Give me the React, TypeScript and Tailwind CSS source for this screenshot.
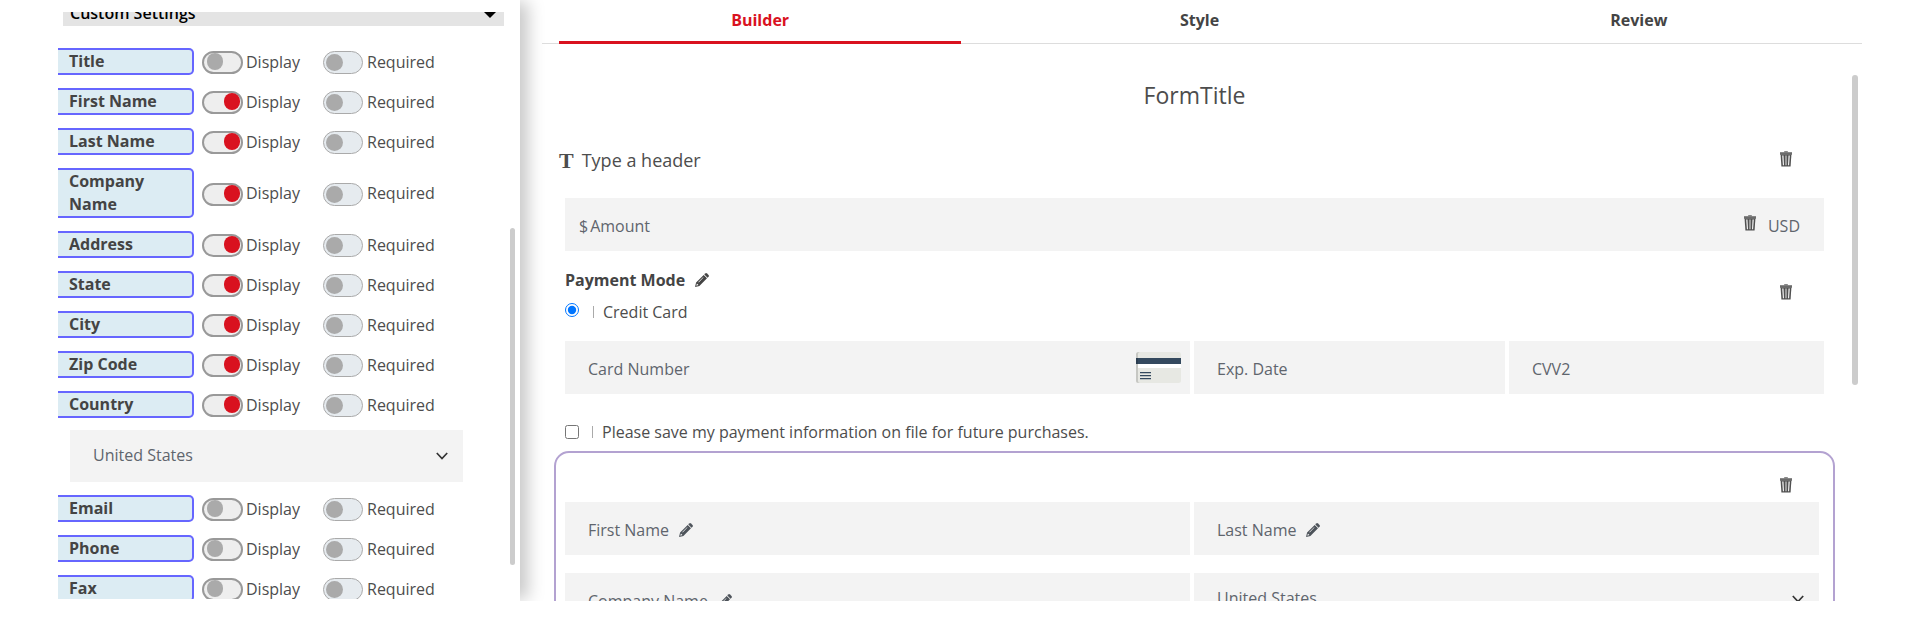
import React from "react";

const rowsTop = [
  { name: "Title", on: false },
  { name: "First Name", on: true },
  { name: "Last Name", on: true },
  { name: "Company Name", on: true },
  { name: "Address", on: true },
  { name: "State", on: true },
  { name: "City", on: true },
  { name: "Zip Code", on: true },
  { name: "Country", on: true },
];

const rowsBottom = [
  { name: "Email", on: false },
  { name: "Phone", on: false },
  { name: "Fax", on: false },
];

function Trash() {
  return (
    <svg viewBox="0 0 12 16" className="h-4 w-3" aria-hidden="true">
      <path d="M4.200 0.300h3.600v1H4.200z" fill="#555" />
      <path d="M0 1.200h12v2.600H0z" fill="#6b6b6b" />
      <path d="M0.600 3.500h10.800L10.600 15.600H1.400z" fill="#505050" />
      <path d="M2.200 4.500h1.300l0.500 9.700H2.900zM9.800 4.500H8.500L8 14.200h1.100z" fill="#f4f4f4" />
      <path d="M5.100 4.500h1.800v9.700H5.100z" fill="#a5a5a5" />
    </svg>
  );
}

function TrashButton({ label }: { label: string }) {
  return (
    <button type="button" aria-label={label} className="block">
      <Trash />
    </button>
  );
}

function Pencil() {
  return (
    <svg viewBox="0 0 14 14" className="h-3.5 w-3.5 shrink-0" fill="currentColor" aria-hidden="true">
      <path d="M10.2 0.500a1.300 1.300 0 0 1 1.800 0l1.500 1.500a1.300 1.300 0 0 1 0 1.800l-0.900 0.900-3.300-3.300z" />
      <path
        fillRule="evenodd"
        d="M8.700 2l3.300 3.300-7.600 7.600L0 14l1.100-4.400zM1.900 10.500l-0.600 2.200 2.200-0.600zM8.100 4.200L3.300 9l0.400 0.400 4.800-4.800z"
      />
    </svg>
  );
}

function Chevron() {
  return (
    <svg viewBox="0 0 12 8" className="h-2 w-3" fill="none" stroke="#333" strokeWidth="1.7" aria-hidden="true">
      <path d="M0.800 1l5.200 5.500L11.200 1" />
    </svg>
  );
}

function CardIcon() {
  return (
    <svg viewBox="0 0 45 31" className="h-[31px] w-[45px] shrink-0" aria-hidden="true">
      <rect width="45" height="31" rx="2.5" fill="#e7e8e3" />
      <path d="M2.5 0H4a2 2 0 0 0-2 2v27a2 2 0 0 0 2 2H2.500A2.500 2.500 0 0 1 0 28.500V2.500A2.500 2.500 0 0 1 2.500 0z" fill="#c6c7c3" />
      <path d="M0 6h45v6H0z" fill="#34495e" />
      <path d="M0 6h2v6H0z" fill="#2c3e50" />
      <path d="M2 12h43v4H2z" fill="#fff" />
      <path d="M4 20h11v1.300H4zM4 23h11v1.300H4zM4 26h11v1.300H4z" fill="#34495e" />
    </svg>
  );
}

function SettingRow({ name, on }: { name: string; on: boolean }) {
  return (
    <div className="flex items-center">
      <div className="w-[136px] shrink-0 rounded-r-[5px] border-2 border-l-0 border-[#6666ff] bg-[#dcecf3] pr-3 pl-[11px] font-bold leading-[23px] text-[#444]">
        {name}
      </div>
      <label className="ml-2 flex w-[121px] items-center gap-[3px] pt-0.5 leading-[22px]">
        <input
          type="checkbox"
          defaultChecked={on}
          className="relative h-[23px] w-[41px] shrink-0 appearance-none rounded-full border-2 border-[#999] bg-[#eee] before:absolute before:top-0 before:left-[3px] before:h-[17px] before:w-4 before:rounded-full before:bg-[#aaa] checked:before:left-5 checked:before:bg-[#d9121f]"
        />
        <span className="pb-0.5">Display</span>
      </label>
      <label className="flex items-center gap-1 pt-0.5 leading-[22px]">
        <input
          type="checkbox"
          disabled
          className="relative h-[23px] w-10 shrink-0 appearance-none rounded-full border border-[#aaa] bg-[#e6ebef] before:absolute before:top-0.5 before:left-0.5 before:h-[17px] before:w-[17px] before:rounded-full before:bg-[#aaa]"
        />
        <span className="pb-0.5">Required</span>
      </label>
    </div>
  );
}

function CountrySelect({ label, className }: { label: string; className: string }) {
  return (
    <div className={"relative flex bg-[#f3f3f3] text-[#5f656d] " + className}>
      <select aria-label={label} className="w-full appearance-none bg-transparent px-[23px] pb-[3px] outline-none">
        <option>United States</option>
      </select>
      <span className="pointer-events-none absolute top-[22px] right-[15px]">
        <Chevron />
      </span>
    </div>
  );
}

function NameField({ label }: { label: string }) {
  return (
    <div className="flex h-[53px] items-center gap-2.5 bg-[#f3f3f3] px-[23px] pt-0.5 text-[#4d535a]">
      <span className="text-[#5f656d]">{label}</span>
      <button type="button" aria-label={"Edit " + label}>
        <Pencil />
      </button>
    </div>
  );
}

const inputClass =
  "min-w-0 bg-transparent pt-0.5 text-[#5f656d] outline-none placeholder:text-[#5f656d] placeholder:opacity-100";

export default function App() {
  return (
    <div className="h-screen bg-white pb-[31px] font-['Open_Sans','Noto_Sans',sans-serif] text-base text-[#4d4d4d]">
      <div className="flex h-full overflow-hidden">
        <aside className="relative w-[520px] shrink-0 pt-3 pb-0.5 pl-[58px] shadow-[10px_0_16px_-2px_rgba(0,0,0,0.22)]">
          <div className="h-full overflow-hidden">
            <button
              type="button"
              className="-mt-3 ml-[5px] flex h-[26px] w-[441px] items-center justify-between bg-[#e4e4e4] pr-2 pl-[7px] text-left font-semibold text-black"
            >
              Custom Settings
              <svg viewBox="0 0 12 6" className="mt-1 h-1.5 w-3" aria-hidden="true">
                <path d="M0 0h12L6 6z" />
              </svg>
            </button>
            <div className="mt-[22px] flex flex-col gap-[13px]">
              {rowsTop.map((r) => (
                <SettingRow key={r.name} {...r} />
              ))}
              <CountrySelect label="Default country" className="-mt-px ml-3 h-[52px] w-[393px]" />
              {rowsBottom.map((r) => (
                <SettingRow key={r.name} {...r} />
              ))}
            </div>
          </div>
          <div className="absolute top-[228px] right-[5px] h-[337px] w-[5px] rounded-full bg-[#ccc]" />
        </aside>

        <main className="relative mr-[58px] ml-[22px] flex min-w-0 flex-1 flex-col">
          <nav className="flex h-11 shrink-0 border-b border-[#ddd] pr-0.5 font-bold text-[#444]">
            {["Builder", "Style", "Review"].map((t, i) => (
              <a
                key={t}
                href={"#" + t.toLowerCase()}
                className={
                  "-mb-px mr-5 ml-[17px] flex flex-1 justify-center pt-2 " +
                  (i === 0 ? "border-b-3 border-[#d9121f] text-[#d9121f]" : "")
                }
              >
                {t}
              </a>
            ))}
          </nav>

          <div className="min-h-0 flex-1 overflow-hidden pr-[27px] pl-3">
            <h1 className="mt-8 text-center text-[23px] leading-[38px]">FormTitle</h1>

            <div className="mt-[30px] flex h-8 items-center gap-2 pr-[43px] pl-[5px]">
              <span className="font-['Liberation_Serif',serif] text-[22px] font-bold">T</span>
              <h2 className="flex-1 text-lg">Type a header</h2>
              <span className="pb-0.5">
                <TrashButton label="Delete header" />
              </span>
            </div>

            <div className="mx-[11px] mt-[22px] flex h-[53px] items-center bg-[#f3f3f3] pr-6 pl-3.5 text-[#5f656d]">
              <label htmlFor="amount" className="pt-0.5 pr-0.5">$</label>
              <input id="amount" placeholder="Amount" className={inputClass + " flex-1"} />
              <span className="pb-1">
                <TrashButton label="Delete amount" />
              </span>
              <span className="pt-0.5 pl-3">USD</span>
            </div>

            <div className="mt-[17px] flex items-center pr-[43px] pl-[11px]">
              <div className="flex-1">
                <div className="flex items-center gap-2.5 font-bold text-[#444]">
                  Payment Mode
                  <button type="button" aria-label="Edit payment mode">
                    <Pencil />
                  </button>
                </div>
                <label className="mt-2 flex items-center">
                  <input type="radio" defaultChecked className="mb-1 h-3.5 w-3.5" />
                  <span className="ml-3.5 h-3 w-px bg-[#aaa]" />
                  <span className="ml-[9px]">Credit Card</span>
                </label>
              </div>
              <span className="pb-2">
                <TrashButton label="Delete payment mode" />
              </span>
            </div>

            <div className="mx-[11px] mt-[17px] grid h-[53px] grid-cols-[625fr_311fr_315fr] gap-1">
              <div className="flex items-center bg-[#f3f3f3] pr-[9px] pl-[23px]">
                <input aria-label="Card Number" placeholder="Card Number" className={inputClass + " flex-1"} />
                <CardIcon />
              </div>
              <div className="flex items-center bg-[#f3f3f3] px-[23px]">
                <input aria-label="Exp. Date" placeholder="Exp. Date" className={inputClass} />
              </div>
              <div className="flex items-center bg-[#f3f3f3] px-[23px]">
                <input aria-label="CVV2" placeholder="CVV2" className={inputClass} />
              </div>
            </div>

            <label className="mt-[26px] ml-[11px] flex items-center">
              <input type="checkbox" className="h-3.5 w-3.5" />
              <span className="ml-[13px] h-3 w-px bg-[#aaa]" />
              <span className="ml-[9px]">Please save my payment information on file for future purchases.</span>
            </label>

            <section className="mt-[7px] rounded-[15px] border-2 border-[#b3a2d1] px-[9px] pt-6 pb-8">
              <div className="flex justify-end pr-8">
                <TrashButton label="Delete billing details" />
              </div>
              <div className="mt-[9px] mr-[5px] grid grid-cols-2 gap-x-1 gap-y-[18px]">
                <NameField label="First Name" />
                <NameField label="Last Name" />
                <NameField label="Company Name" />
                <CountrySelect label="Country" className="h-[53px]" />
              </div>
            </section>
          </div>
          <div className="absolute top-[75px] right-1 h-[310px] w-1.5 rounded-full bg-[#ccc]" />
        </main>
      </div>
    </div>
  );
}
